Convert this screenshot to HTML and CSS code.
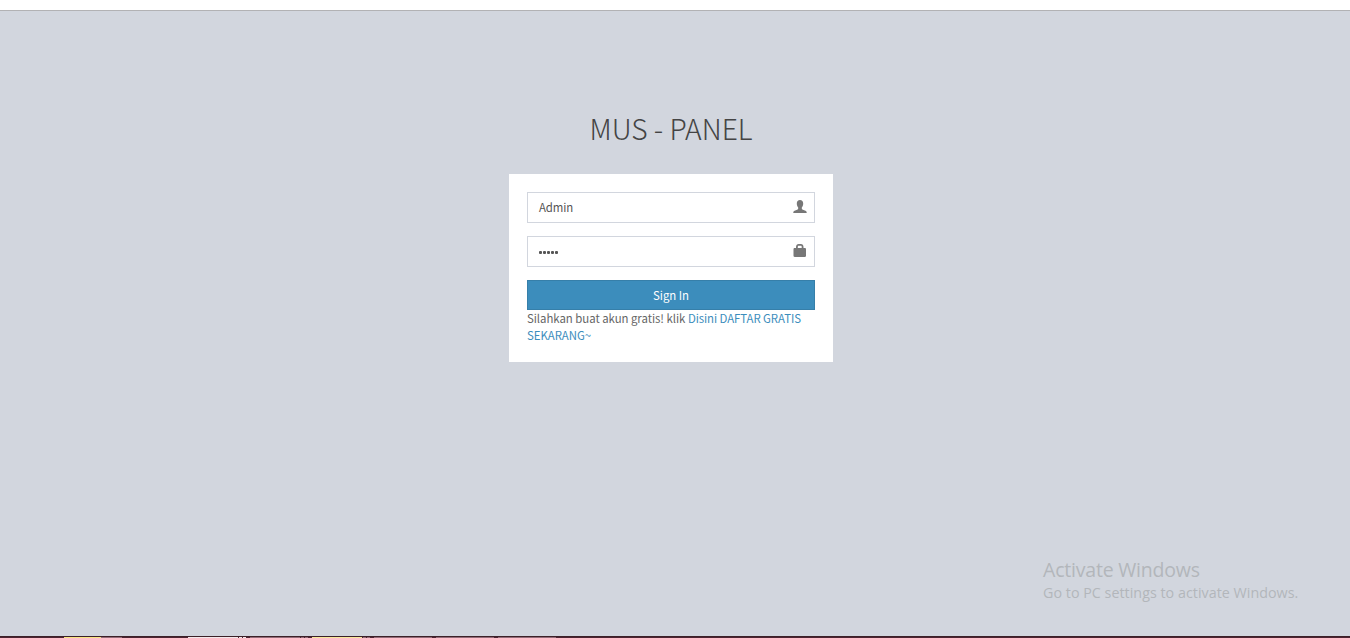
FILE: index.html
```
<!DOCTYPE html>
<html lang="id">
<head>
<meta charset="utf-8">
<title>MUS - PANEL</title>
<link rel="stylesheet" href="styles.css">
</head>
<body>
<div class="browser-edge"></div>
<main class="login-page">
  <h1 class="login-logo"><span>MUS - PANEL</span></h1>
  <form class="login-box">
    <div class="field">
      <span class="value">Admin</span>
      <svg class="icon" viewBox="0 .5 14 14"><path d="M7 .5c2 0 3.200 1.300 3.200 3.400 0 1.700-.6 3-1.400 4v1.200c0 .6.4.9 1.100 1.200l2.500 1c.9.4 1.300.9 1.300 2.200H.3c0-1.300.4-1.800 1.300-2.200l2.500-1c.7-.3 1.100-.6 1.100-1.200V7.900c-.8-1-1.400-2.300-1.400-4C3.800 1.800 5 .5 7 .5z"/></svg>
    </div>
    <div class="field">
      <span class="value dots"><i></i><i></i><i></i><i></i><i></i></span>
      <svg class="icon" viewBox="0 .5 14 14"><path fill-rule="evenodd" d="M3 4.500V3.500C3 1.500 4.300.5 5.500.5h2.300c1.700 0 2.700 1.200 2.700 3v1h1.200c.8 0 1.300.5 1.300 1.200v6.600c0 .8-.5 1.200-1.200 1.200H1.700c-.8 0-1.200-.5-1.200-1.200V5.700C.5 5 1 4.500 1.700 4.500H3zm1.800 0h3.900V3.300c0-.7-.3-1.100-1-1.100H5.800c-.7 0-1 .4-1 1.100v1.200z"/></svg>
    </div>
    <button class="sign-in" type="button"><span>Sign In</span></button>
    <p class="signup"><span class="intro">Silahkan buat akun gratis! klik</span> <a class="link-a">Disini DAFTAR GRATIS</a><br><a class="link-b">SEKARANG~</a></p>
  </form>
</main>
<aside class="activation">
  <div class="activation-title"><span>Activate Windows</span></div>
  <div class="activation-text"><span>Go to PC settings to activate Windows.</span></div>
</aside>
<footer class="taskbar"></footer>
</body>
</html>
```
FILE: styles.css
```
* { box-sizing: border-box; }
body {
  margin: 0;
  height: 638px;
  overflow: hidden;
  display: flex;
  flex-direction: column;
  background: #d2d6de;
  color: #555;
  font: 11.400px/17px "Noto Sans CJK SC", "Open Sans", sans-serif;
}
.browser-edge { height: 11px; flex: none; background: #fff; border-bottom: 1px solid #b2b2b4; }
.login-page { flex: 1; width: 324px; margin-left: 509px; padding-top: 93px; }
.login-logo {
  margin: 0 0 23px;
  height: 47px;
  line-height: 47px;
  text-align: center;
  font-size: 28.200px;
  font-weight: 300;
  color: #444;
}
.login-box { height: 188px; padding: 18px; background: #fff; }
.field {
  height: 31px;
  margin-bottom: 13px;
  padding: 0 7px 0 11px;
  display: flex;
  align-items: center;
  justify-content: space-between;
  border: 1px solid #d2d6de;
}
.icon { width: 14px; height: 14px; margin-bottom: 1px; fill: #777; }
.value { letter-spacing: -0.1px; }
.dots { display: flex; gap: 1px; padding-top: 2px; }
.dots i { width: 3px; height: 3px; border-radius: 1px; background: #555; }
.sign-in {
  display: block;
  width: 100%;
  height: 30px;
  padding: 0;
  border: 1px solid #367fa9;
  background: #3c8dbc;
  color: #fff;
  font: inherit;
  letter-spacing: -0.05px;
}
.signup { margin: 0; color: #666; white-space: nowrap; }
.intro { letter-spacing: -0.03px; }
.signup a { color: #3c8dbc; }
.link-a { letter-spacing: -0.06px; }
.activation {
  position: absolute;
  left: 1043px;
  top: 557px;
  color: #b3b6bb;
  font-family: "Open Sans", sans-serif;
  white-space: nowrap;
}
.activation-title { font-size: 19.500px; line-height: 26px; letter-spacing: -0.2px; }
.activation-text { font-size: 14.300px; line-height: 20px; letter-spacing: 0.02px; }
.taskbar {
  height: 2px;
  flex: none;
  border-top: 1px solid #3b2028;
  background: linear-gradient(90deg, #4d2431 64px, #f8e681 64px 101px, #936b77 101px 122px, #4d2431 122px 188px, #f4e8ea 188px 238px, #4d2431 238px 239px, #f4e8ea 239px 242px, #4d2431 242px 243px, #f4e8ea 243px 246px, #4d2431 246px 250px, #936b77 250px 300px, #4d2431 300px 301px, #936b77 301px 304px, #4d2431 304px 305px, #936b77 305px 308px, #4d2431 308px 312px, #f8e99a 312px 362px, #4d2431 362px 363px, #936b77 363px 366px, #4d2431 366px 367px, #936b77 367px 370px, #4d2431 370px 374px, #936b77 374px 432px, #4d2431 432px 436px, #936b77 436px 494px, #4d2431 494px 498px, #936b77 498px 556px, #4d2431 556px);
}
```
